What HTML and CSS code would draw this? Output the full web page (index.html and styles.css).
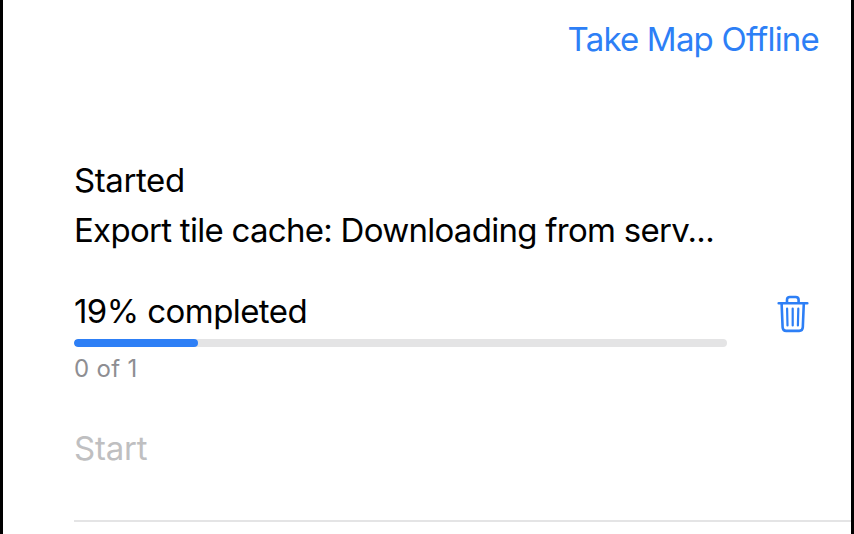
FILE: index.html
```html
<!DOCTYPE html>
<html lang="en">
<head>
<meta charset="utf-8">
<title>Take Map Offline</title>
<link rel="stylesheet" href="styles.css">
</head>
<body>
<main class="screen">
  <header class="toolbar"><button class="action">Take Map Offline</button></header>
  <section class="job">
    <p class="status">Started</p>
    <p class="message">Export tile cache: Downloading from serv...</p>
    <div class="progress-row">
      <div class="progress">
        <p class="percent">19% completed</p>
        <div class="track"><div class="fill"></div></div>
        <p class="count">0 of 1</p>
      </div>
      <button class="delete" aria-label="Delete">
        <svg width="32" height="38" viewBox="0 0 32 38" fill="none" stroke="currentColor" stroke-width="2.6" stroke-linecap="round" stroke-linejoin="round">
          <path d="M1.700 8.300H30.300M10 8V4.900Q10 2 12.900 2H18.700Q21.600 2 21.600 4.900V8M4.600 8.500L5.600 32.200Q5.800 35.900 9.200 35.900H22.200Q25.600 35.900 25.800 32.200L26.800 8.500"/>
          <path stroke-width="2.2" d="M10.100 13.600L10.500 30.500M15.700 13.600V30.500M21.300 13.600L20.900 30.500"/>
        </svg>
      </button>
    </div>
    <button class="start" disabled>Start</button>
  </section>
</main>
</body>
</html>
```

FILE: styles.css
```css
* { box-sizing: border-box; }
body { margin: 0; background: #fff; color: #000; font: 33px/50px Inter, sans-serif; }
p { margin: 0; }
button { padding: 0; border: 0; background: none; font: inherit; text-align: left; }
.screen { height: 534px; overflow: hidden; border: solid #000; border-width: 0 3px; }
.toolbar { display: flex; justify-content: flex-end; padding: 14px 32px 0 0; }
.action { color: #2d7ff6; letter-spacing: -0.8px; font-variant-ligatures: none; }
.job { margin-left: 71px; padding-top: 91px; height: 458px; border-bottom: 2px solid #e4e4e5; }
.status, .message, .percent, .count, .start, .action { white-space: nowrap; }
.status { letter-spacing: -0.4px; }
.message { letter-spacing: -0.72px; }
.percent { letter-spacing: -0.57px; }
.progress-row { display: flex; padding-top: 31px; }
.progress { width: 653px; }
.track { height: 8px; margin-top: 2.6px; border-radius: 4px; background: #e4e4e5; overflow: hidden; }
.fill { width: 19%; height: 8px; border-radius: 4px; background: #2d7ff6; }
.count { margin-top: 7.4px; color: #8e8e92; font-size: 24px; line-height: 30px; letter-spacing: 0.3px; }
.delete { margin-left: 50px; width: 32px; height: 38px; margin-top: 9px; color: #2d7ff6; }
.delete svg { display: block; }
.start { display: block; margin-top: 39px; color: #bfbfc1; letter-spacing: -0.2px; }
```
